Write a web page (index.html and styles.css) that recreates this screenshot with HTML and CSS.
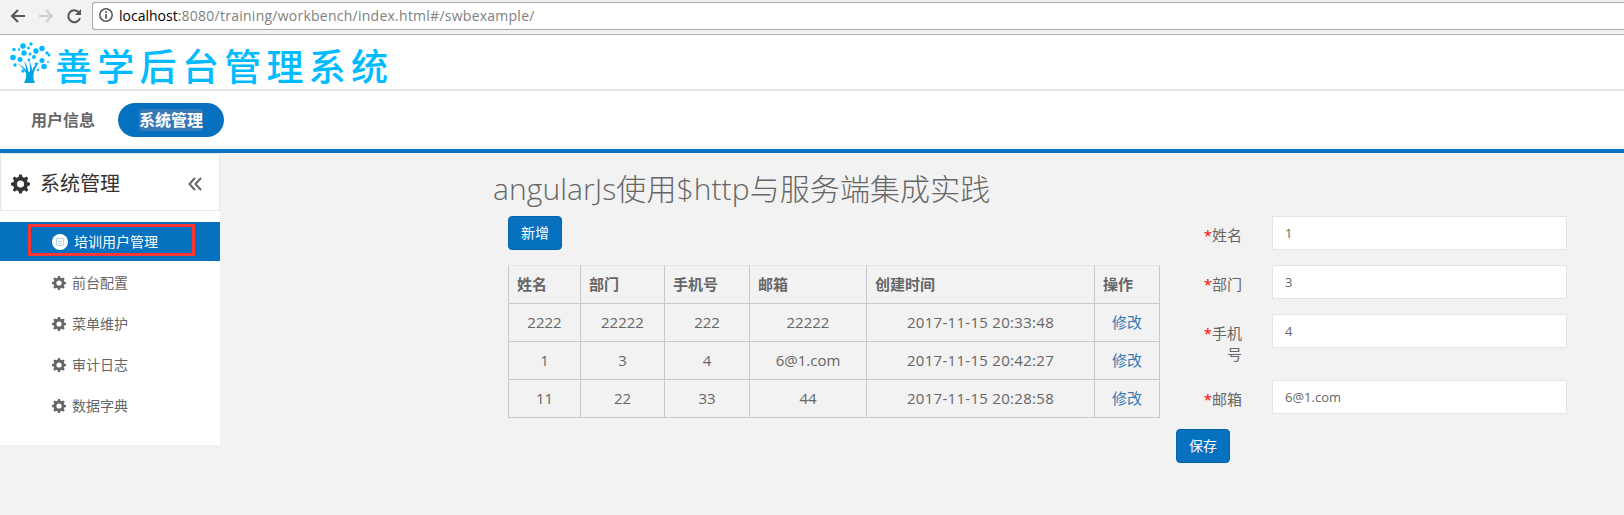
FILE: index.html
```html
<!DOCTYPE html>
<html lang="zh-CN">
<head>
<meta charset="utf-8">
<title>善学后台管理系统</title>
<link rel="stylesheet" href="styles.css">
</head>
<body>
<svg width="0" height="0" class="defs">
  <symbol id="gear" viewBox="0 0 20 20"><path fill-rule="evenodd" d="M8.600 0h2.800l.7 2.500 1.900.8L16.300 2l1.900 1.900-1.400 2.300.8 1.900 2.400.6v2.700l-2.400.6-.8 1.900 1.400 2.300-1.900 1.900-2.300-1.400-1.900.8-.7 2.500H8.600l-.7-2.500-1.900-.8-2.300 1.400-1.900-1.900 1.400-2.300-.8-1.900L0 11.400V8.700l2.400-.6.8-1.900-1.400-2.300L3.700 2 6 3.300l1.900-.8zM10 6.300a3.700 3.700 0 1 0 0 7.400 3.700 3.700 0 0 0 0-7.400z"/></symbol>
</svg>
<div class="browser">
  <svg class="nav-icons" width="86" height="32" fill="none" stroke-width="2">
    <path d="M25 16H12M18 10l-6 6 6 6" stroke="#555"/>
    <path d="M39 16h13M46 10l6 6-6 6" stroke="#cfcfcf"/>
    <path d="M79 12.500A6 6 0 1 0 80 18" stroke="#555"/><path d="M81 9v6h-6z" fill="#555"/>
  </svg>
  <div class="address">
    <svg width="14" height="14" viewBox="0 0 14 14"><circle cx="7" cy="7" r="6.200" fill="none" stroke="#555" stroke-width="1.500"/><path d="M6.200 3.300h1.700v1.700H6.200zM6.200 6.100h1.700v4.700H6.200z" fill="#555"/></svg>
    <span class="url"><b>localhost</b>:8080/training/workbench/index.html#/swbexample/</span>
  </div>
</div>
<header class="brand">
  <svg class="tree" width="42" height="44" viewBox="0 0 42 44" fill="#0bf">
    <path fill="#00a4e4" d="M14 42c2-4 2.500-7 2-10-2-4-6-8-9-10 4 2 7 4 9 7 0-4-1-7-3-10 3 3 5 7 5 11l2 1c0-5 0-9-1-12 2 4 3 8 3 11 1-4 3-6 7-9-2 4-4 6-5 10-1 4-1 7 1 11z"/>
    <circle cx="13" cy="5" r="2.800"/><circle cx="21" cy="3" r="1.700"/><circle cx="18.500" cy="7" r="1.500"/><circle cx="32" cy="7.500" r="2.700"/><circle cx="4" cy="8.500" r="1.700"/><circle cx="9" cy="8.500" r="1.200"/><circle cx="14" cy="12" r="2.700"/><circle cx="26" cy="10" r="2.700"/><circle cx="37" cy="12" r="1.700"/><circle cx="3" cy="16.500" r="2.800"/><circle cx="10" cy="18.500" r="2.500"/><circle cx="20" cy="13" r="1.500"/><circle cx="24" cy="16" r="2"/><circle cx="32" cy="19.500" r="2.500"/><circle cx="39" cy="14" r="1.500"/><circle cx="5" cy="24" r="1.700"/><circle cx="34" cy="25.500" r="2.800"/><circle cx="13" cy="30" r="1.700"/><circle cx="26" cy="23" r="1.400"/><circle cx="19" cy="19" r="1.400"/><circle cx="28" cy="29" r="1.200"/><circle cx="38" cy="21" r="1"/>
  </svg>
  <span class="brand-name">善学后台管理系统</span>
</header>
<nav class="tabs"><a class="tab">用户信息</a><a class="tab active"><span>系统管理</span></a></nav>
<div class="page">
  <aside class="sidebar">
    <div class="side-head"><svg class="gear" width="19" height="20"><use href="#gear"/></svg><span>系统管理</span>
      <svg class="collapse" width="14" height="14" viewBox="0 0 14 14" fill="none" stroke="#666" stroke-width="2"><path d="M7 1L1.500 7 7 13M13 1L7.500 7 13 13"/></svg>
    </div>
    <ul class="menu">
      <li class="current"><span class="marker"></span><svg width="16" height="16" viewBox="0 0 16 16"><circle cx="8" cy="8" r="8" fill="#fff"/><path d="M4.500 4.500h7v7h-7zM6 3.500v2M10 3.500v2M6 7.500h4M6 9.500h4" fill="none" stroke="#b9d3e9"/></svg>培训用户管理</li>
      <li><svg width="14" height="14"><use href="#gear"/></svg>前台配置</li>
      <li><svg width="14" height="14"><use href="#gear"/></svg>菜单维护</li>
      <li><svg width="14" height="14"><use href="#gear"/></svg>审计日志</li>
      <li><svg width="14" height="14"><use href="#gear"/></svg>数据字典</li>
    </ul>
  </aside>
  <main class="content">
    <h1>angularJs使用$http与服务端集成实践</h1>
    <div class="columns">
      <section class="list">
        <button class="btn">新增</button>
        <table>
          <colgroup><col class="c1"><col class="c2"><col class="c3"><col class="c4"><col class="c5"><col class="c6"></colgroup>
          <thead><tr><th>姓名</th><th>部门</th><th>手机号</th><th>邮箱</th><th>创建时间</th><th>操作</th></tr></thead>
          <tbody>
            <tr><td>2222</td><td>22222</td><td>222</td><td>22222</td><td class="time">2017-11-15 20:33:48</td><td><a>修改</a></td></tr>
            <tr><td>1</td><td>3</td><td>4</td><td>6@1.com</td><td class="time">2017-11-15 20:42:27</td><td><a>修改</a></td></tr>
            <tr><td>11</td><td>22</td><td>33</td><td>44</td><td class="time">2017-11-15 20:28:58</td><td><a>修改</a></td></tr>
          </tbody>
        </table>
      </section>
      <form class="editor">
        <div class="field"><label><i>*</i>姓名</label><input value="1"></div>
        <div class="field"><label><i>*</i>部门</label><input value="3"></div>
        <div class="field"><label><i>*</i>手机号</label><input value="4"></div>
        <div class="field"><label><i>*</i>邮箱</label><input value="6@1.com"></div>
        <button class="btn" type="button">保存</button>
      </form>
    </div>
  </main>
</div>
</body>
</html>
```

FILE: styles.css
```css
* { box-sizing: border-box; }
body {
  margin: 0;
  height: 515px;
  overflow: hidden;
  background: #f2f2f2;
  color: #666;
  font: 15px/21px "Open Sans", "Noto Sans CJK SC", sans-serif;
}
.defs { position: absolute; }
.browser {
  display: flex;
  height: 35px;
  border-bottom: 1px solid #b0b0b0;
  background: #f2f2f2;
}
.nav-icons { flex: none; width: 92px; }
.address {
  display: flex;
  align-items: center;
  gap: 6px;
  flex: 1;
  height: 28px;
  margin-top: 2px;
  padding: 0 0 2px 6px;
  border: 1px solid #aaa;
  border-right: 0;
  border-radius: 3px 0 0 3px;
  background: #fff;
}
.url { color: #808080; font-size: 14px; letter-spacing: .25px; white-space: nowrap; }
.url b { color: #000; font-weight: 400; letter-spacing: 0; }
.brand {
  display: flex;
  height: 56px;
  padding: 6px 0 0 10px;
  border-bottom: 2px solid #e4e7ea;
  background: #fff;
}
.tree { flex: none; }
.brand-name {
  margin-left: 3px;
  color: #0bf;
  font: 500 37px/48px "Noto Sans CJK SC", sans-serif;
  letter-spacing: 5.3px;
}
.tabs {
  display: flex;
  gap: 2px;
  height: 62px;
  padding: 12px 0 0 10px;
  border-bottom: 4px solid #0671bf;
  background: #fff;
}
.tab {
  height: 34px;
  padding: 0 21px;
  border-radius: 17px;
  font-size: 16px;
  font-weight: 600;
  line-height: 34px;
}
.tab.active { background: #0671bf; color: #fff; font-weight: 700; }
.tab span { padding: 0; border-radius: 3px; background: #337ab7; }
.page { display: flex; align-items: flex-start; }
.sidebar { flex: none; width: 220px; height: 292px; background: #fff; }
.side-head {
  display: flex;
  align-items: center;
  height: 58px;
  padding: 3px 17px 0 10px;
  border: 1px solid #e8e8e8;
  color: #333;
  font-size: 20px;
}
.gear { margin-right: 10px; fill: #333; }
.collapse { margin-left: auto; }
.menu { margin: 11px 0 0; padding: 0; list-style: none; font-size: 14px; }
.menu li {
  display: flex;
  align-items: center;
  gap: 6px;
  height: 41px;
  padding-left: 52px;
  fill: #666;
}
.menu .current {
  position: relative;
  height: 39px;
  margin-bottom: 1px;
  background: #0671bf;
  color: #fff;
}
.marker {
  position: absolute;
  left: 28px;
  top: 2px;
  width: 167px;
  height: 32px;
  border: 3px solid #f93535;
}
.content { padding-left: 273px; }
h1 {
  margin: 0;
  height: 63px;
  padding-top: 19px;
  font-size: 30px;
  font-weight: 300;
  letter-spacing: .08px;
  line-height: 33px;
  white-space: nowrap;
}
.columns { display: flex; gap: 16px; padding-left: 15px; }
.btn {
  display: block;
  width: 54px;
  height: 34px;
  padding: 0 0 2px;
  border: 1px solid #0565aa;
  border-radius: 4px;
  background: #0671bf;
  color: #fff;
  font: 14px/20px "Noto Sans CJK SC", sans-serif;
}
table {
  width: 652px;
  margin-top: 15px;
  border-collapse: collapse;
  table-layout: fixed;
}
.c1 { width: 72px; } .c2 { width: 84px; } .c3 { width: 85px; }
.c4 { width: 117px; } .c5 { width: 228px; } .c6 { width: 65px; }
tr { height: 38px; }
th, td { padding: 0 8px; border: 1px solid #c8c8c8; text-align: center; }
th { border-top-color: #e7e7e7; text-align: left; }
.time { letter-spacing: .3px; }
td a { color: #337ab7; }
.editor { width: 391px; }
.field { display: flex; margin-bottom: 15px; }
.field label {
  width: 66px;
  margin-right: 30px;
  padding: 9px 0 0 20px;
  text-align: right;
}
.field i { color: #f00; font-style: normal; }
.field input {
  width: 295px;
  height: 34px;
  padding: 0 12px;
  border: 1px solid #e4e4e4;
  background: #fff;
  color: #666;
  font: 13px "Open Sans", sans-serif;
}
```
